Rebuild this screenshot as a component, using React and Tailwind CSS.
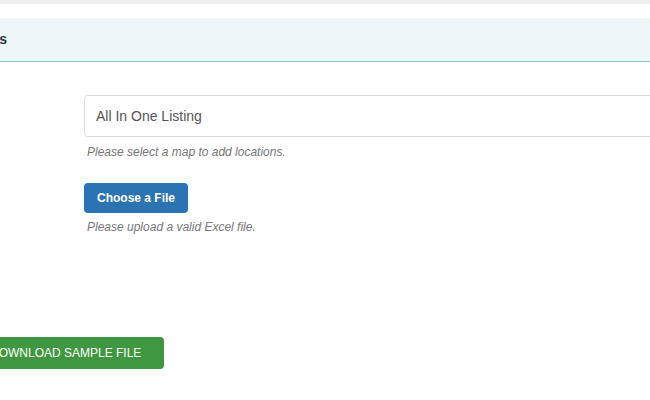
import React from 'react';

const App = () => {
  return (
    <div className="w-[650px] h-[400px] overflow-hidden bg-white font-['Liberation_Sans',Arial,sans-serif]">
      <div className="h-[4px] bg-[#efefef]" />
      <div className="h-[14px] bg-white" />

      {/* Panel heading */}
      <div className="h-[44px] bg-[#eff6f9] border-b border-[#86c1d3] flex items-center overflow-hidden">
        <h3 className="ml-[-59px] text-[14px] font-bold text-[#2f3640] whitespace-nowrap">Locations</h3>
      </div>

      {/* Form */}
      <div className="pl-[84px] pt-[33px]">
        <div className="w-[620px] h-[42px] border border-[#dcdcdc] rounded-[4px] flex items-center px-[11px] text-[14px] text-[#555]">
          All In One Listing
        </div>
        <p className="mt-[6px] ml-[3px] text-[12px] italic text-[#777]">Please select a map to add locations.</p>

        <button className="mt-[22px] h-[30px] px-[13px] bg-[#2b74b4] text-white text-[12px] font-bold rounded-[4px]">
          Choose a File
        </button>
        <p className="mt-[5px] ml-[3px] text-[12px] italic text-[#777]">Please upload a valid Excel file.</p>
      </div>

      <div className="mt-[101px] overflow-hidden">
        <button className="ml-[-33px] h-[32px] px-[23px] bg-[#3f973f] text-white text-[12px] rounded-[4px] whitespace-nowrap">
          DOWNLOAD SAMPLE FILE
        </button>
      </div>
    </div>
  );
};

export default App;
